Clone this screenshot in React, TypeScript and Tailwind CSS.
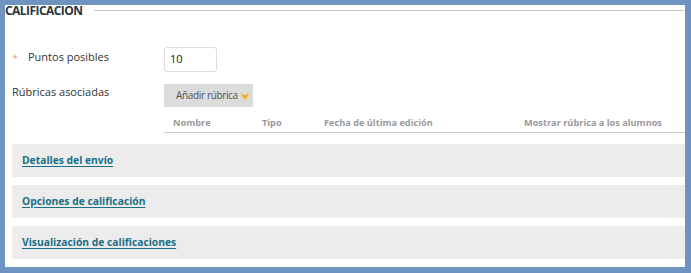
import React from "react";

const font = { fontFamily: '"Open Sans", "Noto Sans", sans-serif' };

const sections = [
  "Detalles del envío",
  "Opciones de calificación",
  "Visualización de calificaciones",
];

export default function App() {
  return (
    <div
      className="w-[691px] h-[273px] bg-[#6f93c0] pl-[5px] pt-[5px] pr-[6px] pb-[6px] overflow-hidden"
      style={font}
    >
      <div className="w-full h-full bg-white">
        {/* heading */}
        <div className="flex h-[11px]">
          <h2 className="text-[12px] leading-[13px] h-[13px] -mt-[1px] font-bold text-[#2b3540] tracking-[-0.55px]">
            CALIFICACION
          </h2>
          <div className="flex-1 h-px bg-[#c8c8c8] ml-[11px] mt-[5px]"></div>
        </div>

        {/* puntos */}
        <div className="flex mt-[31px] h-[25px]">
          <div className="w-[159px] flex items-center pl-[7px] -mt-[5px]">
            <span className="text-[#f4a585] text-[11px] w-[16px] mt-[2px]">*</span>
            <span className="text-[11px] text-[#333]">Puntos posibles</span>
          </div>
          <div className="w-[53px] h-[25px] border border-[#dcdcdc] rounded-[3px] flex items-center pl-[5px] text-[11px] text-[#222]">
            10
          </div>
        </div>

        {/* rubricas */}
        <div className="flex mt-[12px]">
          <div className="w-[159px] pl-[7px] text-[11px] text-[#333] leading-[15px]">
            Rúbricas asociadas
          </div>
          <button className="w-[89px] h-[23px] bg-[#dcdcdc] flex items-center pl-[12px] text-[10px] tracking-[-0.35px] text-[#555] gap-[3px] whitespace-nowrap">
            Añadir rúbrica
            <svg width="8" height="9" viewBox="0 0 8 9" className="mt-[1px]">
              <path d="M0.5 0.5 L4 3.5 L7.5 0.5 L7.5 4.5 L4 8.5 L0.5 4.5 Z" fill="#ecc44a" />
              <path d="M2 3 L4 5.2 L6 3" stroke="#c98a1a" strokeWidth="0.8" fill="none" />
            </svg>
          </button>
        </div>

        {/* table header */}
        <div className="ml-[159px] mt-[6px] h-[20px] border-b border-[#c8c8c8] flex items-center text-[9.2px] font-bold text-[#9a9a9a] whitespace-nowrap">
          <span className="w-[98px] pl-[9px]">Nombre</span>
          <span className="w-[62px]">Tipo</span>
          <span className="w-[200px]">Fecha de última edición</span>
          <span>Mostrar rúbrica a los alumnos</span>
        </div>

        {/* sections */}
        <div className="flex flex-col gap-[8px] ml-[7px] mt-[11px] w-[673px]">
          {sections.map((s) => (
            <div key={s} className="h-[33px] bg-[#ececec] flex items-center pl-[10px]">
              <a
                href="#"
                className="text-[10.3px] font-bold text-[#1b6f86] underline underline-offset-[2px]"
              >
                {s}
              </a>
            </div>
          ))}
        </div>
      </div>
    </div>
  );
}
